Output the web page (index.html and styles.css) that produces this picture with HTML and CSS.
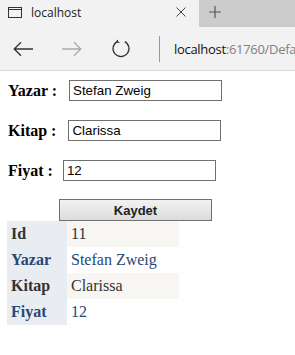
FILE: index.html
```html
<!DOCTYPE html>
<html>
<head>
<meta charset="utf-8">
<title>localhost</title>
<link rel="stylesheet" href="styles.css">
</head>
<body>
<div class="chrome">
  <div class="tabbar">
    <div class="tab">
      <svg class="tab-icon" width="14" height="11" viewBox="0 0 14 11"><rect x="0.5" y="0.5" width="13" height="10" fill="none" stroke="#333" stroke-width="1"/><line x1="0.5" y1="2.5" x2="13.5" y2="2.5" stroke="#333" stroke-width="1"/></svg>
      <span class="tab-title">localhost</span>
      <svg class="tab-close" width="10" height="10" viewBox="0 0 10 10"><path d="M0.5 0.5 L9.5 9.5 M9.5 0.5 L0.5 9.5" stroke="#444" stroke-width="1" fill="none"/></svg>
    </div>
    <div class="newtab">
      <svg width="12" height="12" viewBox="0 0 12 12"><path d="M6 0 V12 M0 6 H12" stroke="#555" stroke-width="1.2" fill="none"/></svg>
    </div>
  </div>
  <div class="navbar">
    <svg class="nav-btn" width="21" height="16" viewBox="0 0 21 16"><path d="M20 8 H1.5 M8 1.2 L1.2 8 L8 14.8" stroke="#333" stroke-width="1.3" fill="none"/></svg>
    <svg class="nav-btn fwd" width="21" height="16" viewBox="0 0 21 16"><path d="M1 8 H19.5 M13 1.2 L19.8 8 L13 14.8" stroke="#aaa" stroke-width="1.3" fill="none"/></svg>
    <svg class="nav-btn refresh" width="20" height="20" viewBox="0 0 20 20"><path d="M13.8 2.6 A8 8 0 1 1 6.2 2.6" stroke="#333" stroke-width="1.2" fill="none"/><path d="M6.5 0.8 L6.2 2.8 L8.3 3.6" stroke="#333" stroke-width="1.2" fill="none"/></svg>
    <span class="sep"></span>
    <span class="url"><span class="host">localhost</span><span class="path">:61760/Default.aspx</span></span>
  </div>
</div>
<div class="page">
  <form class="form">
    <div class="field"><b class="label">Yazar : </b><input class="text" type="text" value="Stefan Zweig"></div>
    <div class="field"><b class="label">Kitap : </b><input class="text" type="text" value="Clarissa"></div>
    <div class="field"><b class="label label-short">Fiyat : </b><input class="text" type="text" value="12"></div>
    <div class="actions"><button class="save" type="button">Kaydet</button></div>
    <table class="details">
      <tr class="row"><td class="head">Id</td><td class="val">11</td></tr>
      <tr class="alt"><td class="head">Yazar</td><td class="val">Stefan Zweig</td></tr>
      <tr class="row"><td class="head">Kitap</td><td class="val">Clarissa</td></tr>
      <tr class="alt"><td class="head">Fiyat</td><td class="val">12</td></tr>
    </table>
  </form>
</div>
</body>
</html>
```
FILE: styles.css
```css
html, body {
  margin: 0;
  padding: 0;
  background: #fff;
}
.chrome {
  background: #f2f2f2;
  border-bottom: 1px solid #dadada;
  height: 70px;
}
.tabbar {
  display: flex;
  height: 27px;
}
.tab {
  width: 199px;
  flex: none;
  display: flex;
  align-items: center;
}
.tab svg, .navbar svg, .newtab svg, .sep {
  flex: none;
}
.tab-icon {
  margin-left: 8px;
  margin-top: -3px;
}
.tab-title {
  margin-left: 9px;
  font-family: "Open Sans", "Noto Sans", sans-serif;
  font-size: 12px;
  color: #222;
  margin-top: -2px;
}
.tab-close {
  margin-left: auto;
  margin-right: 13px;
  margin-top: -3px;
}
.newtab {
  flex: 1;
  background: #cccccc;
  display: flex;
  align-items: center;
  padding-left: 10px;
}
.newtab svg {
  margin-top: -3px;
}
.navbar {
  display: flex;
  align-items: center;
  height: 43px;
}
.nav-btn {
  margin-left: 13px;
}
.nav-btn.fwd {
  margin-left: 27px;
}
.nav-btn.refresh {
  margin-left: 29px;
}
.sep {
  width: 1px;
  height: 26px;
  background: #999;
  margin-left: 28px;
}
.url {
  flex: 1;
  min-width: 0;
  margin-left: 14px;
  font-family: "Open Sans", "Noto Sans", sans-serif;
  font-size: 13px;
  white-space: nowrap;
  overflow: hidden;
  letter-spacing: -0.3px;
}
.host { color: #111; }
.path { color: #808080; }

.page {
  padding: 8px 0 0 8px;
  font-family: "Liberation Serif", "Times New Roman", serif;
  font-size: 16px;
  color: #000;
}
.form {
  margin: 0;
}
.field {
  display: flex;
  align-items: center;
  height: 23px;
  margin-bottom: 17px;
}
.label {
  white-space: pre;
  margin-right: 8px;
}
.label-short {
  margin-right: 6px;
}
.text {
  box-sizing: border-box;
  width: 153px;
  height: 21px;
  margin: 0;
  border: 1px solid #707070;
  padding: 1px 3px;
  font-family: "Liberation Sans", Arial, sans-serif;
  font-size: 13.33px;
  color: #000;
  background: #fff;
}
.actions {
  padding-left: 51px;
  height: 22px;
}
.save {
  box-sizing: border-box;
  width: 153px;
  height: 22px;
  margin: 0;
  border: 1px solid #707070;
  background: linear-gradient(#f2f2f2, #dcdcdc);
  font-family: "Liberation Sans", Arial, sans-serif;
  font-size: 13px;
  font-weight: bold;
  color: #222;
  padding: 0;
}
.details {
  border-collapse: collapse;
  margin-left: -1px;
}
.details td {
  padding: 4px;
  height: 18px;
  line-height: 18px;
}
.head {
  background: #e9ecf1;
  font-weight: bold;
  width: 52px;
}
.val {
  width: 104px;
}
.row td { color: #333333; }
.row .val { background: #f7f6f3; }
.alt td { color: #284775; }
.alt .val { background: #ffffff; }
```
